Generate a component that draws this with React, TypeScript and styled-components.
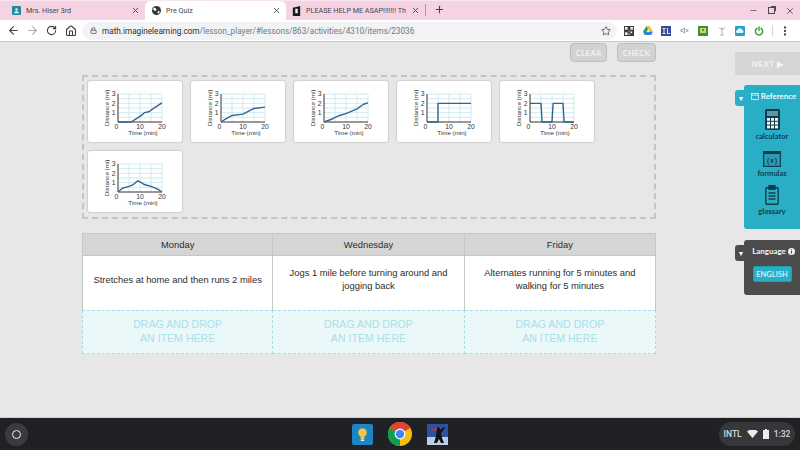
import React from 'react';
import styled, { createGlobalStyle } from 'styled-components';
import {
  ArrowLeft,
  ArrowRight,
  RotateCw,
  Home,
  Star,
  Lock,
  MoreVertical,
  X,
  Plus,
  Minus,
} from 'lucide-react';

const GlobalStyle = createGlobalStyle`
  html, body {
    margin: 0;
    padding: 0;
    width: 800px;
    height: 450px;
    overflow: hidden;
    background: #e7e7e7;
  }
  * { box-sizing: border-box; }
`;

// Browser chrome
const Page = styled.div`
  width: 800px;
  height: 450px;
  display: flex;
  flex-direction: column;
  font-family: 'Liberation Sans', Arial, sans-serif;
`;

const TabStrip = styled.div`
  height: 20px;
  flex: none;
  display: flex;
  align-items: stretch;
  background: #f5d3e3;
  border-top: 1px solid #fae6ef;
  font-family: Roboto, sans-serif;
  font-size: 7.2px;
  color: #45474a;
`;

const Tab = styled.div<{ $active?: boolean; $width: number; $inset: number }>`
  width: ${(p) => p.$width}px;
  flex: none;
  display: flex;
  align-items: center;
  gap: 5px;
  padding: 0 5px 0 ${(p) => p.$inset}px;
  background: ${(p) => (p.$active ? '#ffffff' : 'transparent')};
  border-radius: ${(p) => (p.$active ? '6px 6px 0 0' : '0')};
`;

const TabTitle = styled.span`
  flex: 1;
  white-space: nowrap;
`;

const TabDivider = styled.div`
  width: 1px;
  height: 12px;
  margin: 3px 8px 0 0;
  background: #a99ca3;
`;

const WindowControls = styled.div`
  margin-left: auto;
  display: flex;
  align-items: center;
  gap: 10px;
  padding-right: 5px;
  color: #50484c;
`;

const RestoreBox = styled.div`
  width: 7px;
  height: 7px;
  border: 1px solid #50484c;
  box-shadow: 2px -2px 0 -1px #50484c;
`;

const Toolbar = styled.div`
  height: 22px;
  flex: none;
  display: flex;
  align-items: center;
  padding-left: 4px;
  background: #ffffff;
  border-bottom: 1px solid #c9c9c9;
`;

const NavButton = styled.div<{ $muted?: boolean }>`
  width: 19px;
  height: 20px;
  flex: none;
  display: flex;
  align-items: center;
  justify-content: center;
  color: ${(p) => (p.$muted ? '#a9adb1' : '#3c4043')};
`;

const Omnibox = styled.div`
  width: 535px;
  height: 18px;
  margin-left: 2px;
  padding: 0 6px 0 8px;
  flex: none;
  display: flex;
  align-items: center;
  background: #f1f3f4;
  border-radius: 9px;
  font-family: Roboto, sans-serif;
  font-size: 8.2px;
  color: #74777b;
  white-space: nowrap;
`;

const Host = styled.span`
  color: #2b2d30;
  margin-left: 5px;
`;

const EndIcon = styled.span`
  margin-left: auto;
  display: flex;
`;

const Extensions = styled.div`
  display: flex;
  align-items: center;
  gap: 8.5px;
  margin-left: 7px;
`;

const ExtDivider = styled.div`
  width: 1px;
  height: 11px;
  margin-right: -3px;
  background: #d6d6d6;
`;

// Lesson area
const Lesson = styled.div`
  flex: 1;
  display: flex;
  min-height: 0;
  background: #e7e7e7;
`;

const Work = styled.div`
  width: 574px;
  margin-left: 82px;
  flex: none;
  display: flex;
  flex-direction: column;
  padding-top: 1px;
`;

const Actions = styled.div`
  height: 19px;
  display: flex;
  justify-content: flex-end;
  gap: 10px;
`;

const ActionButton = styled.div`
  height: 19px;
  padding: 0 4.5px;
  display: flex;
  align-items: center;
  background: #d2d2d2;
  border: 1.5px solid #bdbdbd;
  border-radius: 4px;
  color: #f3f3f3;
  font-family: Lato, sans-serif;
  font-weight: 700;
  font-size: 7.6px;
  letter-spacing: 0.5px;
`;

const Tray = styled.div`
  height: 144px;
  margin-top: 13px;
  padding: 4px 3.5px;
  display: grid;
  grid-template-columns: repeat(5, 94px);
  grid-auto-rows: 61px;
  column-gap: 9.1px;
  row-gap: 9px;
  border: 2px dashed #c4c4c4;
`;

const Card = styled.div`
  background: #ffffff;
  border-radius: 2px;
  box-shadow: 0 0 2px rgba(0, 0, 0, 0.35);
`;

const Board = styled.div`
  margin-top: 14px;
  display: grid;
  grid-template-columns: repeat(3, 1fr);
  grid-template-rows: 23px 54px 44px;
  color: #2c2c2c;
  font-size: 9.4px;
  line-height: 13px;
  text-align: center;
`;

const HeadCell = styled.div`
  display: flex;
  align-items: center;
  justify-content: center;
  background: #d5d5d5;
  border: 1px solid #c6c6c6;
  border-left-width: 0;
  &:first-child { border-left-width: 1px; }
`;

const BodyCell = styled.div<{ $first?: boolean }>`
  display: flex;
  align-items: center;
  justify-content: center;
  padding: 0 10px 8px;
  background: #ffffff;
  border-right: 1px solid #c6c6c6;
  border-left: ${(p) => (p.$first ? '1px solid #c6c6c6' : '0')};
`;

const DropCell = styled.div<{ $first?: boolean }>`
  display: flex;
  align-items: center;
  justify-content: center;
  padding-bottom: 2px;
  background: #ebf8fa;
  border: 1.5px dashed #a4dde3;
  border-left-width: ${(p) => (p.$first ? '1.5px' : '0')};
  color: #a8e0e8;
  font-size: 10.6px;
  line-height: 14.5px;
`;

// Side rail
const Rail = styled.div`
  width: 65px;
  margin-left: auto;
  flex: none;
  display: flex;
  flex-direction: column;
  padding-top: 10px;
  font-family: Lato, sans-serif;
`;

const NextButton = styled.div`
  height: 23px;
  display: flex;
  align-items: center;
  justify-content: center;
  gap: 2px;
  background: #d6d6d6;
  border-radius: 2px 0 0 2px;
  color: #f4f4f4;
  font-weight: 700;
  font-size: 7.8px;
  letter-spacing: 0.5px;
`;

const Drawer = styled.div<{ $tone: string; $height: number; $top: number }>`
  position: relative;
  height: ${(p) => p.$height}px;
  margin-top: ${(p) => p.$top}px;
  margin-left: 9px;
  display: flex;
  flex-direction: column;
  align-items: center;
  background: ${(p) => p.$tone};
  border-radius: 3px 0 0 3px;
`;

const DrawerTab = styled.div<{ $tone: string }>`
  position: absolute;
  left: -9px;
  top: 5px;
  width: 14px;
  height: 16px;
  display: flex;
  align-items: center;
  justify-content: center;
  padding-right: 2px;
  background: ${(p) => p.$tone};
  border-radius: 3px 0 0 3px;
  color: #ffffff;
  font-size: 7px;
`;

const DrawerTitle = styled.div`
  height: 22px;
  padding-left: 3px;
  display: flex;
  align-items: center;
  gap: 2px;
  color: #eef9fb;
  font-size: 7.9px;
  font-weight: 700;
  white-space: nowrap;
`;

const Tool = styled.div<{ $height: number }>`
  height: ${(p) => p.$height}px;
  display: flex;
  flex-direction: column;
  align-items: center;
  justify-content: flex-end;
  gap: 2px;
  color: #123c4b;
  font-size: 7.5px;
  line-height: 9px;
  font-weight: 700;
`;

const LanguageButton = styled.div`
  width: 39px;
  height: 16px;
  margin-top: 4px;
  display: flex;
  align-items: center;
  justify-content: center;
  background: #2aaec6;
  border: 1px solid #1f9db4;
  border-radius: 2px;
  color: #cdf0f6;
  font-size: 7.5px;
  font-weight: 700;
`;

// Chrome OS shelf
const Shelf = styled.div`
  height: 33px;
  flex: none;
  display: grid;
  grid-template-columns: 1fr auto 1fr;
  align-items: center;
  padding: 0 5px;
  background: #202124;
  border-top: 1px solid #cfcfcf;
`;

const Launcher = styled.div`
  width: 23px;
  height: 23px;
  display: flex;
  align-items: center;
  justify-content: center;
  background: #3a3b3e;
  border-radius: 50%;
`;

const LauncherRing = styled.div`
  width: 9px;
  height: 9px;
  border: 1.5px solid #eeeeee;
  border-radius: 50%;
`;

const ShelfApps = styled.div`
  display: flex;
  align-items: center;
  gap: 15px;
`;

const ShelfApp = styled.div<{ $active?: boolean }>`
  position: relative;
  display: flex;
  &::after {
    content: '';
    display: ${(p) => (p.$active ? 'block' : 'none')};
    position: absolute;
    left: 50%;
    bottom: -5px;
    width: 5px;
    height: 1px;
    margin-left: -2.5px;
    background: #e8e8e8;
  }
`;

const StatusPill = styled.div`
  justify-self: end;
  width: 76px;
  height: 24px;
  display: flex;
  align-items: center;
  justify-content: center;
  gap: 5px;
  background: #36373a;
  border-radius: 12px;
  color: #d8d8d8;
  font-family: Roboto, sans-serif;
  font-size: 8.5px;
  font-weight: 500;
`;

type Point = [number, number];

const charts: Point[][] = [
  [[0, 0], [6, 0], [8, 0.3], [10, 0.6], [12, 1], [14, 1.1], [17, 1.6], [20, 2.05]],
  [[0, 0], [2, 0.3], [5, 0.7], [10, 0.85], [15, 1.45], [20, 1.6]],
  [[0, 0], [4, 0.35], [7, 0.7], [10, 0.9], [15, 1.4], [18, 1.9], [20, 2.05]],
  [[0, 0], [5, 0], [5, 2], [20, 2]],
  [[0, 2], [5, 2], [5.5, 0], [10, 0], [10.5, 2], [15, 2], [15.5, 0], [20, 0]],
  [[0, 0], [2, 0.4], [5, 0.6], [7, 0.8], [9, 1.2], [10, 1.1], [12, 0.8], [15, 0.6], [18, 0.3], [20, 0]],
];

const PLOT_X = 30;
const PLOT_Y = 41;
const PX_PER_MIN = 2.2;
const PX_PER_MILE = 9.33;

function Chart({ points }: { points: Point[] }) {
  const line = points
    .map(([t, d]) => `${PLOT_X + t * PX_PER_MIN},${PLOT_Y - d * PX_PER_MILE}`)
    .join(' ');
  const labelFont = { fontFamily: 'Liberation Sans, sans-serif', fontSize: 6.2, fill: '#333' };
  const tickFont = { ...labelFont, fontSize: 6.8 };
  return (
    <svg width="94" height="61" viewBox="0 0 94 61">
      {[5, 10, 15, 20].map((t) => (
        <line
          key={t}
          x1={PLOT_X + t * PX_PER_MIN}
          x2={PLOT_X + t * PX_PER_MIN}
          y1={PLOT_Y - 28}
          y2={PLOT_Y}
          stroke="#c4e6ee"
          strokeWidth="0.8"
        />
      ))}
      {[0.5, 1, 1.5, 2, 2.5, 3].map((d) => (
        <line
          key={d}
          x1={PLOT_X}
          x2={PLOT_X + 44}
          y1={PLOT_Y - d * PX_PER_MILE}
          y2={PLOT_Y - d * PX_PER_MILE}
          stroke="#c4e6ee"
          strokeWidth="0.8"
        />
      ))}
      <path d={`M${PLOT_X} ${PLOT_Y - 28}V${PLOT_Y}H${PLOT_X + 44}`} fill="none" stroke="#333" strokeWidth="1" />
      <polyline points={line} fill="none" stroke="#33658f" strokeWidth="1.4" strokeLinejoin="round" />
      {[1, 2, 3].map((d) => (
        <text key={d} x={PLOT_X - 2.5} y={PLOT_Y - d * PX_PER_MILE + 2.4} textAnchor="end" {...tickFont}>
          {d}
        </text>
      ))}
      {[0, 10, 20].map((t) => (
        <text key={t} x={PLOT_X + t * PX_PER_MIN - (t === 0 ? 1.5 : 0)} y={PLOT_Y + 6.8} textAnchor="middle" {...tickFont}>
          {t}
        </text>
      ))}
      <text x={PLOT_X + 25} y={PLOT_Y + 13} textAnchor="middle" {...labelFont}>
        Time (min)
      </text>
      <text transform={`translate(21 ${PLOT_Y - 14}) rotate(-90)`} textAnchor="middle" {...labelFont}>
        Distance (mi)
      </text>
    </svg>
  );
}

const ClassroomIcon = () => (
  <svg width="9" height="9" viewBox="0 0 13 12" preserveAspectRatio="none" style={{ flex: 'none' }}>
    <rect width="13" height="12" rx="1" fill="#1f8aa0" />
    <circle cx="6.5" cy="4.6" r="1.7" fill="#e6f4f7" />
    <path d="M3 9.5c.4-2 2-2.6 3.5-2.6s3.1.6 3.5 2.6z" fill="#e6f4f7" />
  </svg>
);

const GlobeIcon = () => (
  <svg width="9" height="9" viewBox="0 0 9 9" style={{ flex: 'none' }}>
    <circle cx="4.5" cy="4.5" r="4.5" fill="#33363a" />
    <path d="M2 1.5l2 1 .6 1.6-1.6.8L1 3.6zM6 5l2 .4-1.5 2.4-1-.8z" fill="#fff" />
  </svg>
);

const BrainlyIcon = () => (
  <svg width="9" height="10" viewBox="0 0 11 11" preserveAspectRatio="none" style={{ flex: 'none' }}>
    <path d="M1 2l9-2v11H1z" fill="#1b1b1b" />
    <rect x="4" y="3" width="3" height="5" fill="#f2f2f2" />
  </svg>
);

const QrIcon = () => (
  <svg width="10" height="10" viewBox="0 0 11 11">
    <rect width="11" height="11" fill="#3b3b3b" />
    <path d="M1 1h3v3H1zM7 1h3v3H7zM1 7h3v3H1zM5 5h1v1H5zM7 6h2v2H7zM5 8h1v2H5z" fill="#e8e8e8" />
  </svg>
);

const DriveIcon = () => (
  <svg width="10" height="9" viewBox="0 0 11 10">
    <path d="M3.7 0h3.6l3.7 6.5H7.4z" fill="#f5bd2f" />
    <path d="M3.7 0L0 6.5 1.8 10l3.7-6.5z" fill="#1e9c5a" />
    <path d="M3 6.5h8L9.2 10H1.8z" fill="#3f7fe6" />
  </svg>
);

const IlIcon = () => (
  <svg width="10" height="10" viewBox="0 0 10 10">
    <rect width="10" height="10" fill="#3d4a96" />
    <path d="M1.5 2h3v1H3.5v4h1v1h-3V7h1V3h-1zM6 2h1v5h2v1H6z" fill="#e8eaf6" />
  </svg>
);

const SoundIcon = () => (
  <svg width="10" height="9" viewBox="0 0 11 9" fill="none" stroke="#7f93a8" strokeWidth="1">
    <path d="M1 3.5h2l2-2v6l-2-2H1zM7 3l2 3M9 3L7 6" />
  </svg>
);

const GreenBoxIcon = () => (
  <svg width="10" height="10" viewBox="0 0 10 10">
    <rect width="10" height="10" fill="#1f9a57" />
    <rect x="2" y="2" width="6" height="5" fill="#f3c94a" />
    <circle cx="5" cy="4" r="1" fill="#1f7a47" />
  </svg>
);

const AntennaIcon = () => (
  <svg width="10" height="10" viewBox="0 0 10 10" fill="none" stroke="#8fb6a8" strokeWidth="0.9">
    <path d="M5 3v6M3 9h4M2 1.5c1 2 5 2 6 0" />
    <circle cx="5" cy="2.5" r="1" fill="#d9a7a7" stroke="none" />
  </svg>
);

const CloudIcon = () => (
  <svg width="10" height="10" viewBox="0 0 10 10">
    <rect width="10" height="10" rx="1" fill="#2a9fc9" />
    <path d="M2.5 7a1.5 1.5 0 0 1 0-3 2.3 2.3 0 0 1 4.4-.4A1.8 1.8 0 0 1 7.5 7z" fill="#e5f6fb" />
  </svg>
);

const PowerIcon = () => (
  <svg width="10" height="10" viewBox="0 0 11 11" fill="none" stroke="#3f9a3f" strokeWidth="1.6" strokeLinecap="round">
    <path d="M3.2 2.6a4 4 0 1 0 4.6 0M5.5 1v4" />
  </svg>
);

const CalculatorIcon = () => (
  <svg width="15" height="21" viewBox="0 0 15 21">
    <rect width="15" height="21" rx="1.5" fill="#123c4b" />
    <rect x="2" y="2" width="11" height="5" fill="#5f97a8" />
    {[0, 1, 2].flatMap((row) =>
      [0, 1, 2].map((col) => (
        <rect key={`${row}-${col}`} x={2 + col * 4} y={9 + row * 3.8} width="3" height="2.8" fill="#e8f6f9" />
      )),
    )}
  </svg>
);

const FormulasIcon = () => (
  <svg width="18" height="16" viewBox="0 0 18 16">
    <rect x="0.6" y="0.6" width="16.8" height="14.8" fill="#2a9db5" stroke="#123c4b" strokeWidth="1.2" />
    <rect width="18" height="3" fill="#123c4b" />
    <text x="9" y="12" textAnchor="middle" fontFamily="Liberation Mono, monospace" fontSize="6.5" fill="#123c4b">
      (x)
    </text>
  </svg>
);

const GlossaryIcon = () => (
  <svg width="14" height="20" viewBox="0 0 14 20" fill="none" stroke="#123c4b" strokeWidth="1.4">
    <rect x="0.8" y="2.8" width="12.4" height="16.4" rx="1" />
    <rect x="4" y="0.8" width="6" height="3.4" fill="#123c4b" />
    <path d="M3.5 8h7M3.5 11h7M3.5 14h7" />
  </svg>
);

const FolderGlyph = () => (
  <svg width="8" height="7" viewBox="0 0 10 8" preserveAspectRatio="none" fill="none" stroke="#eef9fb" strokeWidth="0.9">
    <rect x="0.5" y="0.5" width="9" height="7" />
    <path d="M0.5 2.5h9" />
  </svg>
);

const InfoGlyph = () => (
  <svg width="7" height="7" viewBox="0 0 8 8">
    <circle cx="4" cy="4" r="4" fill="#f2f2f2" />
    <rect x="3.4" y="3.4" width="1.2" height="3" fill="#4d4d4d" />
    <rect x="3.4" y="1.6" width="1.2" height="1.2" fill="#4d4d4d" />
  </svg>
);

const BulbApp = () => (
  <svg width="21" height="21" viewBox="0 0 21 21">
    <rect width="21" height="21" rx="2" fill="#1c86c4" />
    <circle cx="10.5" cy="8.5" r="4.3" fill="#f6c344" />
    <rect x="8.6" y="12" width="3.8" height="3" fill="#f6c344" />
    <rect x="8.8" y="15.4" width="3.4" height="1.6" fill="#eef4f8" />
  </svg>
);

const ChromeApp = () => (
  <svg width="24" height="24" viewBox="0 0 24 24">
    <circle cx="12" cy="12" r="12" fill="#f4c20d" />
    <path d="M12 12L1.6 6A12 12 0 0 1 22.4 6z" fill="#db4437" />
    <path d="M12 12L1.6 6A12 12 0 0 0 12 24z" fill="#0f9d58" />
    <circle cx="12" cy="12" r="5.4" fill="#ffffff" />
    <circle cx="12" cy="12" r="4.2" fill="#4285f4" />
  </svg>
);

const HeroApp = () => (
  <svg width="21" height="21" viewBox="0 0 21 21">
    <rect width="21" height="21" fill="#2f4fa0" />
    <rect y="13" width="21" height="8" fill="#b9cfe8" />
    <path d="M2 6l8-2 2 3z" fill="#c7353a" />
    <path d="M10 4l2-1 1 3 4-3 1 1-4 5 1 5 2 5h-3l-2-4-2 4H7l2-7z" fill="#111" />
  </svg>
);

const WifiGlyph = () => (
  <svg width="11" height="8" viewBox="0 0 11 8">
    <path d="M0 1.5a8 8 0 0 1 11 0L5.5 8z" fill="#ececec" />
  </svg>
);

const BatteryGlyph = () => (
  <svg width="6" height="10" viewBox="0 0 6 10">
    <path d="M2 0h2v1h2v9H0V1h2z" fill="#ececec" />
  </svg>
);

const columns = [
  { day: 'Monday', text: 'Stretches at home and then runs 2 miles' },
  { day: 'Wednesday', text: 'Jogs 1 mile before turning around and jogging back' },
  { day: 'Friday', text: 'Alternates running for 5 minutes and walking for 5 minutes' },
];

export default function App() {
  return (
    <Page>
      <GlobalStyle />
      <TabStrip>
        <Tab $width={145} $inset={12}>
          <ClassroomIcon />
          <TabTitle>Mrs. Hiser 3rd</TabTitle>
          <X size={9} strokeWidth={2.4} />
        </Tab>
        <Tab $width={141} $inset={7} $active>
          <GlobeIcon />
          <TabTitle>Pre Quiz</TabTitle>
          <X size={9} strokeWidth={2.4} />
        </Tab>
        <Tab $width={139} $inset={6}>
          <BrainlyIcon />
          <TabTitle>PLEASE HELP ME ASAP!!!!!!! Th</TabTitle>
          <X size={9} strokeWidth={2.4} />
        </Tab>
        <TabDivider />
        <Plus size={11} strokeWidth={2.4} style={{ marginTop: 3 }} />
        <WindowControls>
          <Minus size={9} />
          <RestoreBox />
          <X size={10} />
        </WindowControls>
      </TabStrip>
      <Toolbar>
        <NavButton>
          <ArrowLeft size={13} strokeWidth={2} />
        </NavButton>
        <NavButton $muted>
          <ArrowRight size={13} strokeWidth={2} />
        </NavButton>
        <NavButton>
          <RotateCw size={11} strokeWidth={2.4} />
        </NavButton>
        <NavButton>
          <Home size={12} strokeWidth={2.2} />
        </NavButton>
        <Omnibox>
          <Lock size={7} strokeWidth={3} color="#5f6368" />
          <Host>math.imaginelearning.com</Host>/lesson_player/#lessons/863/activities/4310/items/23036
          <EndIcon>
            <Star size={10} color="#45484c" />
          </EndIcon>
        </Omnibox>
        <Extensions>
          <QrIcon />
          <DriveIcon />
          <IlIcon />
          <SoundIcon />
          <GreenBoxIcon />
          <AntennaIcon />
          <CloudIcon />
          <PowerIcon />
          <ExtDivider />
          <MoreVertical size={12} strokeWidth={2.6} color="#3c4043" />
        </Extensions>
      </Toolbar>
      <Lesson>
        <Work>
          <Actions>
            <ActionButton>CLEAR</ActionButton>
            <ActionButton>CHECK</ActionButton>
          </Actions>
          <Tray>
            {charts.map((points, i) => (
              <Card key={i}>
                <Chart points={points} />
              </Card>
            ))}
          </Tray>
          <Board>
            {columns.map((c) => (
              <HeadCell key={c.day}>{c.day}</HeadCell>
            ))}
            {columns.map((c, i) => (
              <BodyCell key={c.day} $first={i === 0}>
                {c.text}
              </BodyCell>
            ))}
            {columns.map((c, i) => (
              <DropCell key={c.day} $first={i === 0}>
                DRAG AND DROP
                <br />
                AN ITEM HERE
              </DropCell>
            ))}
          </Board>
        </Work>
        <Rail>
          <NextButton>NEXT ▶</NextButton>
          <Drawer $tone="#29aec6" $height={144} $top={10}>
            <DrawerTab $tone="#29aec6">▼</DrawerTab>
            <DrawerTitle>
              <FolderGlyph />
              Reference
            </DrawerTitle>
            <Tool $height={34}>
              <CalculatorIcon />
              calculator
            </Tool>
            <Tool $height={37}>
              <FormulasIcon />
              formulas
            </Tool>
            <Tool $height={38}>
              <GlossaryIcon />
              glossary
            </Tool>
          </Drawer>
          <Drawer $tone="#4c4c4c" $height={55} $top={11}>
            <DrawerTab $tone="#4c4c4c">▼</DrawerTab>
            <DrawerTitle>
              Language
              <InfoGlyph />
            </DrawerTitle>
            <LanguageButton>ENGLISH</LanguageButton>
          </Drawer>
        </Rail>
      </Lesson>
      <Shelf>
        <Launcher>
          <LauncherRing />
        </Launcher>
        <ShelfApps>
          <ShelfApp>
            <BulbApp />
          </ShelfApp>
          <ShelfApp $active>
            <ChromeApp />
          </ShelfApp>
          <ShelfApp>
            <HeroApp />
          </ShelfApp>
        </ShelfApps>
        <StatusPill>
          INTL
          <WifiGlyph />
          <BatteryGlyph />
          1:32
        </StatusPill>
      </Shelf>
    </Page>
  );
}
